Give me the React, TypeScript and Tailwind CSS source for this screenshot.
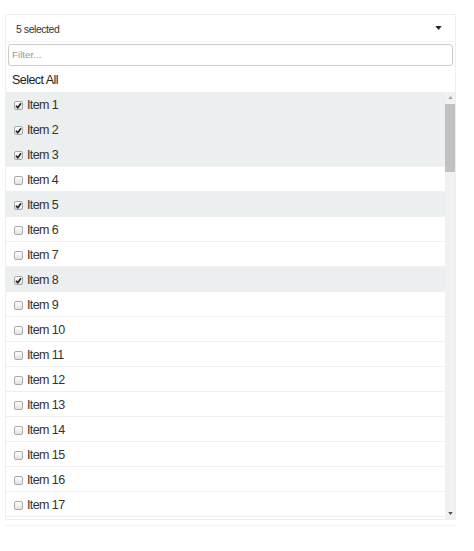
import React from "react";

const checked = new Set([1, 2, 3, 5, 8]);

function Box({ on }: { on: boolean }) {
  return (
    <span className="relative inline-block shrink-0 w-[9px] h-[9px] rounded-[2px] border border-[#a9a9a9] bg-gradient-to-b from-white to-[#e2e2e2]">
      {on && (
        <svg viewBox="0 0 10 10" className="absolute left-[-1px] top-[-1px] w-[9px] h-[9px]">
          <path d="M2.2 5.2 L4.2 7.4 L7.8 2.6" fill="none" stroke="#222" strokeWidth="1.8" />
        </svg>
      )}
    </span>
  );
}

export default function App() {
  const items = Array.from({ length: 17 }, (_, i) => i + 1);
  return (
    <div className="w-[474px] h-[551px] bg-white" style={{ fontFamily: '"Liberation Sans", Arial, sans-serif' }}>
      <div className="ml-[5px] pt-[14px] w-[451px]">
        <div className="border border-[#eeeeee] flex flex-col">
          <div className="h-[27px] flex items-center justify-between pl-[10px] pr-[13px] pt-[3px] border-b border-[#f2f2f2]">
            <span className="text-[10.5px] tracking-[-0.45px] text-[#333]">5 selected</span>
            <svg viewBox="0 0 8 5" className="w-[7px] h-[4px] mb-[3px]">
              <path d="M0 0 L8 0 L4 5 Z" fill="#222" />
            </svg>
          </div>
          <div className="px-[2px] pt-[2px]">
            <div className="h-[22px] border border-[#cccccc] rounded-[3px] flex items-center px-[3px]">
              <span className="text-[9.8px] text-[#999]">Filter...</span>
            </div>
          </div>
          <div className="h-[26px] flex items-center pl-[6px] pt-[2px] text-[12.5px] tracking-[-0.55px] text-[#222]">Select All</div>
          <div className="flex h-[427px] overflow-hidden">
            <div className="flex-1 flex flex-col">
              {items.map((n) => (
                <div
                  key={n}
                  className={`h-[25px] shrink-0 flex items-center pl-[8px] pt-[2px] gap-[4px] border-b border-[#f0f0f0] text-[12.5px] tracking-[-0.6px] text-[#333] ${checked.has(n) ? "bg-[#ecefef]" : "bg-white"}`}
                >
                  <Box on={checked.has(n)} />
                  <span>Item {n}</span>
                </div>
              ))}
              <div className="h-[25px] shrink-0 bg-white" />
            </div>
            <div className="w-[10px] bg-[#f1f1f1] flex flex-col items-center">
              <svg viewBox="0 0 6 4" className="w-[5px] h-[3px] mt-[4px]">
                <path d="M0 4 L6 4 L3 0 Z" fill="#a3a3a3" />
              </svg>
              <div className="w-[10px] h-[68px] bg-[#c1c1c1] mt-[5px]" />
              <div className="flex-1" />
              <svg viewBox="0 0 6 4" className="w-[5px] h-[3px] mb-[4px]">
                <path d="M0 0 L6 0 L3 4 Z" fill="#505050" />
              </svg>
            </div>
          </div>
        </div>
        <div className="h-[6px] border-b border-[#f3f3f3]" />
      </div>
    </div>
  );
}
